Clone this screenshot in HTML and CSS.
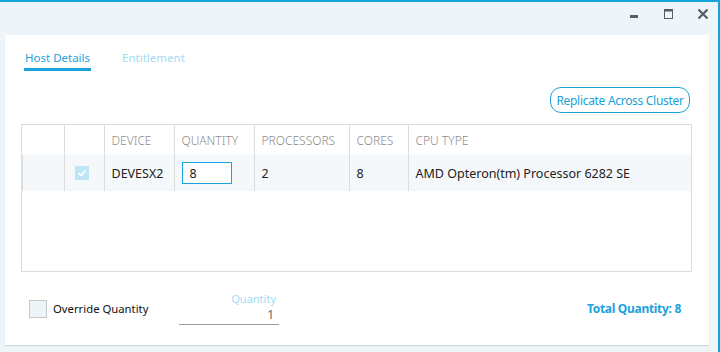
FILE: index.html
```html
<!DOCTYPE html>
<html lang="en">
<head>
    <meta charset="UTF-8">
    <meta name="viewport" content="width=device-width, initial-scale=1.0">
    <title>Host Details</title>
    <link rel="stylesheet" href="styles.css">
</head>
<body>
    <div class="titlebar">
        <button class="win-btn" title="Minimize">
            <svg width="10" height="12" viewBox="0 0 10 12"><rect x="1" y="7" width="8" height="3" fill="#555e66"/></svg>
        </button>
        <button class="win-btn" title="Maximize">
            <svg width="10" height="12" viewBox="0 0 10 12"><rect x="1.5" y="1.5" width="8" height="9" fill="none" stroke="#555e66" stroke-width="1"/><rect x="1" y="1" width="9" height="2.5" fill="#555e66"/></svg>
        </button>
        <button class="win-btn" title="Close">
            <svg width="12" height="12" viewBox="0 0 12 12"><path d="M1.5 1.5 L10.5 10.5 M10.5 1.5 L1.5 10.5" stroke="#555e66" stroke-width="2.2"/></svg>
        </button>
    </div>

    <div class="card">
        <div class="tabs">
            <span class="tab active">Host Details</span>
            <span class="tab">Entitlement</span>
        </div>

        <div class="actions">
            <button class="btn-outline">Replicate Across Cluster</button>
        </div>

        <div class="grid-box">
            <table class="hosts">
                <colgroup>
                    <col style="width:42px"><col style="width:40px"><col style="width:70px"><col style="width:80px"><col style="width:95px"><col style="width:59px"><col>
                </colgroup>
                <thead>
                    <tr>
                        <th></th><th></th><th>Device</th><th>Quantity</th><th>Processors</th><th>Cores</th><th>CPU Type</th>
                    </tr>
                </thead>
                <tbody>
                    <tr>
                        <td class="first"></td>
                        <td><span class="check-on">
                            <svg width="14" height="14" viewBox="0 0 14 14"><path d="M3.5 7.2 L6 9.6 L10.6 4.4" fill="none" stroke="#fff" stroke-width="1.6"/></svg>
                        </span></td>
                        <td>DEVESX2</td>
                        <td><input class="qty-input" type="text" value="8"></td>
                        <td>2</td>
                        <td>8</td>
                        <td>AMD Opteron(tm) Processor 6282 SE</td>
                    </tr>
                </tbody>
            </table>
        </div>

        <div class="footer-row">
            <label class="override">
                <span class="check-off"></span>
                Override Quantity
            </label>
            <div class="qty-field">
                <span class="qty-label">Quantity</span>
                <span class="qty-value">1</span>
            </div>
            <div class="total">Total Quantity: 8</div>
        </div>
    </div>
</body>
</html>
```

FILE: styles.css
```css
body {
    margin: 0;
    height: 350px;
    background-color: #eef5f8;
    border-top: 2px solid #15a3dc;
    border-right: 2px solid #15a3dc;
    font-family: "Noto Sans", "Open Sans", sans-serif;
    font-size: 12px;
    color: #222;
}

.titlebar {
    height: 33px;
    display: flex;
    justify-content: flex-end;
    align-items: flex-start;
    padding-right: 9px;
}

.win-btn {
    border: none;
    background: none;
    padding: 0;
    margin: 6px 0 0 22px;
    width: 12px;
    height: 12px;
    display: flex;
}

.card {
    margin: 0 9px 0 5px;
    height: 310px;
    background-color: white;
    box-shadow: 0 1px 1px rgba(0, 0, 0, 0.12);
    box-sizing: border-box;
    padding: 14px 17px 0 16px;
}

.tabs {
    display: flex;
    gap: 31px;
    padding-left: 4px;
}

.tab {
    color: #a3dcf2;
    font-size: 11.5px;
    line-height: 17px;
    padding-bottom: 2px;
}

.tab.active {
    color: #1aa3dc;
    border-bottom: 3px solid #1aa3dc;
    padding: 0 1px 2px 1px;
    margin-left: -1px;
}

.actions {
    display: flex;
    justify-content: flex-end;
    margin-top: 16px;
    padding-right: 2px;
}

.btn-outline {
    font-family: "Noto Sans", "Open Sans", sans-serif;
    font-size: 12px;
    color: #1a9fd6;
    background: white;
    border: 1px solid #1aa3dc;
    border-radius: 11px;
    height: 26px;
    width: 140px;
    padding: 0;
    letter-spacing: -0.3px;
}

.grid-box {
    margin-top: 11px;
    height: 148px;
    border: 1px solid #dcdcdc;
    box-sizing: border-box;
}

.hosts {
    width: 100%;
    border-collapse: collapse;
    table-layout: fixed;
}

.hosts th {
    height: 30px;
    text-align: left;
    font-weight: 300;
    color: #8c8c8c;
    text-transform: uppercase;
    font-size: 12px;
    padding: 0 0 0 7px;
    border-right: 1px solid #dcdcdc;
}

.hosts td {
    height: 36px;
    background-color: #f5f8fb;
    padding: 0 0 0 7px;
    font-size: 12.5px;
    color: #222;
    border-right: 1px solid #dcdcdc;
}

.hosts th:last-child,
.hosts td:last-child {
    border-right: none;
}

.hosts td.first {
    box-shadow: inset 1px 0 #dcdcdc;
}

.check-on {
    display: flex;
    width: 14px;
    height: 14px;
    margin-left: 3px;
    background-color: #bfe6f6;
}

.qty-input {
    width: 50px;
    height: 22px;
    box-sizing: border-box;
    border: 1px solid #1aa3dc;
    padding: 0 7px;
    font-family: "Noto Sans", "Open Sans", sans-serif;
    font-size: 12.5px;
    color: #222;
    background: white;
    outline: none;
}

.footer-row {
    display: flex;
    align-items: center;
    margin-top: 20px;
    padding-left: 8px;
    padding-right: 11px;
}

.override {
    display: flex;
    align-items: center;
    gap: 6px;
    width: 150px;
    color: #111;
    font-size: 11.3px;
}

.check-off {
    width: 16px;
    height: 16px;
    border: 1px solid #c8c8c8;
    background-color: #eef5f8;
}

.qty-field {
    width: 100px;
    display: flex;
    flex-direction: column;
    align-items: flex-end;
    border-bottom: 1px solid #9a9a9a;
    padding-right: 3px;
    box-sizing: border-box;
}

.qty-label {
    color: #a3dcf2;
    font-size: 11px;
    line-height: 14px;
}

.qty-value {
    color: #666;
    font-size: 12px;
    line-height: 18px;
    padding-right: 2px;
}

.total {
    margin-left: auto;
    color: #1aa3dc;
    font-weight: bold;
    font-size: 12px;
    letter-spacing: -0.3px;
}
```
